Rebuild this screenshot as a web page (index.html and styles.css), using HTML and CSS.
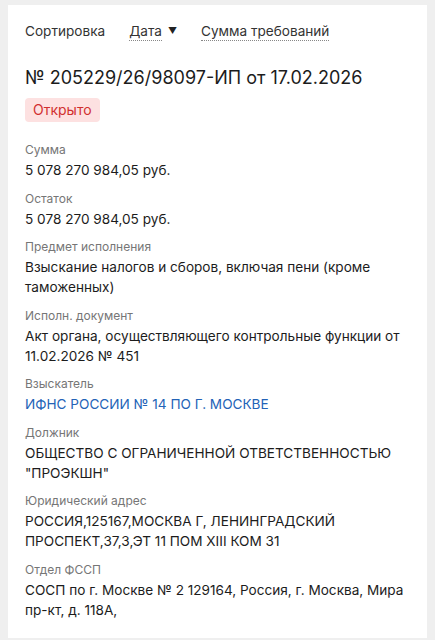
FILE: index.html
```html
<!DOCTYPE html>
<html lang="ru">

<head>
    <meta charset="UTF-8">
    <meta name="viewport" content="width=device-width, initial-scale=1.0">
    <title>Исполнительное производство</title>
    <link rel="stylesheet" href="styles.css">
</head>

<body>
    <div class="card">
        <!-- Sort bar -->
        <div class="sort-bar">
            <span class="sort-title">Сортировка</span>
            <span class="sort-option">
                <span class="sort-link">Дата</span>
                <span class="sort-arrow">&#9660;</span>
            </span>
            <span class="sort-option">
                <span class="sort-link">Сумма требований</span>
            </span>
        </div>

        <!-- Case header -->
        <div class="case-title">№ 205229/26/98097-ИП от 17.02.2026</div>
        <div class="status-badge">Открыто</div>

        <!-- Fields -->
        <div class="fields">
            <div class="field">
                <div class="field-label">Сумма</div>
                <div class="field-value">5 078 270 984,05 руб.</div>
            </div>
            <div class="field">
                <div class="field-label">Остаток</div>
                <div class="field-value">5 078 270 984,05 руб.</div>
            </div>
            <div class="field">
                <div class="field-label">Предмет исполнения</div>
                <div class="field-value">Взыскание налогов и сборов, включая пени (кроме таможенных)</div>
            </div>
            <div class="field">
                <div class="field-label">Исполн. документ</div>
                <div class="field-value">Акт органа, осуществляющего контрольные функции от 11.02.2026 № 451</div>
            </div>
            <div class="field">
                <div class="field-label">Взыскатель</div>
                <div class="field-value field-link">ИФНС РОССИИ № 14 ПО Г. МОСКВЕ</div>
            </div>
            <div class="field">
                <div class="field-label">Должник</div>
                <div class="field-value">ОБЩЕСТВО С ОГРАНИЧЕННОЙ ОТВЕТСТВЕННОСТЬЮ "ПРОЭКШН"</div>
            </div>
            <div class="field">
                <div class="field-label">Юридический адрес</div>
                <div class="field-value">РОССИЯ,125167,МОСКВА Г, ЛЕНИНГРАДСКИЙ ПРОСПЕКТ,37,3,ЭТ 11 ПОМ XIII КОМ 31</div>
            </div>
            <div class="field">
                <div class="field-label">Отдел ФССП</div>
                <div class="field-value">СОСП по г. Москве № 2 129164, Россия, г. Москва, Мира пр-кт, д. 118А,</div>
            </div>
        </div>
    </div>
</body>

</html>
```

FILE: styles.css
```css
body {
    margin: 0;
    padding: 5px 8px 6px;
    background-color: #efefef;
    font-family: Inter, "Noto Sans", sans-serif;
    color: #1c1c1c;
}

/* Card */
.card {
    background-color: #ffffff;
    padding: 16px 13px 18px 17px;
    min-height: 595px;
}

/* Sort bar */
.sort-bar {
    display: flex;
    align-items: center;
    gap: 24px;
    font-size: 13.6px;
    line-height: 20px;
    color: #333;
}

.sort-option {
    display: flex;
    align-items: center;
    gap: 6px;
}

.sort-link {
    border-bottom: 1px dotted #888;
    line-height: 18px;
}

.sort-arrow {
    font-size: 9px;
    color: #222;
}

/* Case header */
.case-title {
    margin-top: 24px;
    font-size: 18px;
    line-height: 26px;
}

.status-badge {
    display: inline-block;
    margin-top: 7px;
    padding: 3px 8px;
    background-color: #fde1e1;
    color: #d12f2f;
    font-size: 14px;
    line-height: 18px;
    border-radius: 4px;
}

/* Fields */
.fields {
    display: flex;
    flex-direction: column;
    gap: 9.5px;
    margin-top: 19px;
}

.field-label {
    font-size: 12px;
    line-height: 17px;
    color: #767676;
    margin-bottom: 2px;
}

.field-value {
    font-size: 13.6px;
    line-height: 20px;
}

.field-link {
    color: #2363b7;
}
```
